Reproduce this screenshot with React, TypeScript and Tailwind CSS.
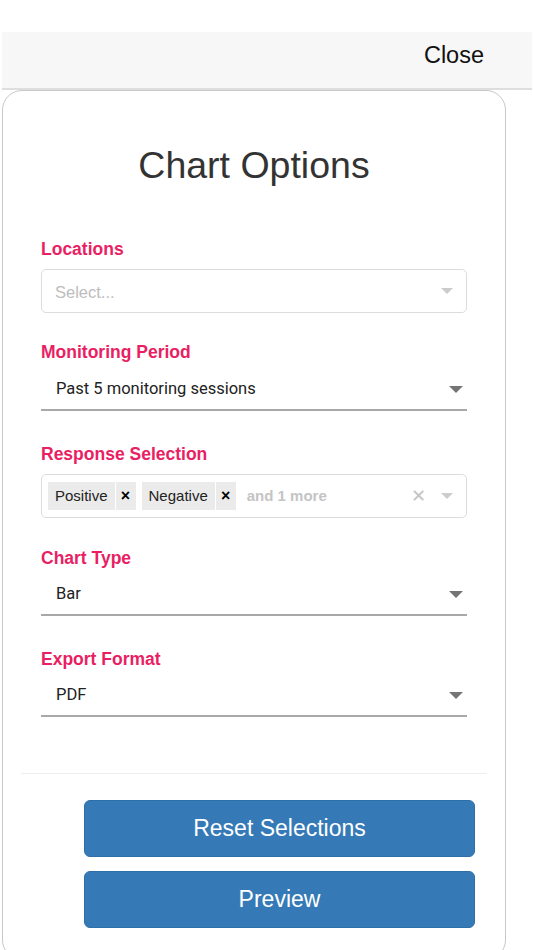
import React from "react";

const sans = "font-['Liberation_Sans',Arial,sans-serif]";
const roboto = "font-['Roboto',Arial,sans-serif]";

function Caret({ color = "#757575", w = 14 }: { color?: string; w?: number }) {
  return (
    <svg width={w} height={w / 2} viewBox="0 0 14 7">
      <path d="M0 0h14L7 7z" fill={color} />
    </svg>
  );
}

function FieldLabel({ children, top }: { children: React.ReactNode; top: string }) {
  return (
    <div className={`${sans} ${top} text-[17.5px] leading-[20px] font-bold text-[#e91e63]`}>
      {children}
    </div>
  );
}

function UnderlineSelect({ value, pt }: { value: string; pt: string }) {
  return (
    <div
      className={`flex items-center justify-between border-b-2 border-[#a8a8a8] ${pt} pb-[10px] pl-[15px] pr-[4px]`}
    >
      <span className={`${roboto} text-[16.5px] leading-[20px] text-[#222]`}>{value}</span>
      <Caret />
    </div>
  );
}

function Chip({ label }: { label: string }) {
  return (
    <div className="flex h-[28px] items-center bg-[#ebebeb]">
      <span className={`${sans} px-[7px] text-[15px] text-[#222]`}>{label}</span>
      <span className={`${sans} flex h-full w-[21px] items-center justify-center border-l border-white text-[16px] font-bold text-black`}>
        ×
      </span>
    </div>
  );
}

export default function App() {
  return (
    <div className="h-[950px] w-[534px] overflow-hidden bg-white pt-[32px]">
      <div className="ml-[2px] flex h-[58px] w-[530px] items-center justify-end border-b-2 border-[#dedede] bg-[#f7f7f7] pb-[8px] pr-[48px]">
        <span className={`${sans} text-[23.5px] text-[#111]`}>Close</span>
      </div>

      <div className="ml-[2px] h-[870px] w-[504px] rounded-[20px] border border-[#c8c8c8] px-[38px] pt-[53px]">
        <h1 className={`${sans} text-center text-[37.5px] leading-[42px] text-[#333]`}>Chart Options</h1>

        <FieldLabel top="mt-[53px]">Locations</FieldLabel>
        <div className="mt-[10px] flex h-[44px] items-center justify-between rounded-[5px] border border-[#dcdcdc] pl-[13px] pr-[13px]">
          <span className={`${sans} pt-[2px] text-[16.5px] text-[#bdbdbd]`}>Select...</span>
          <Caret color="#cccccc" w={12} />
        </div>

        <FieldLabel top="mt-[29px]">Monitoring Period</FieldLabel>
        <UnderlineSelect value="Past 5 monitoring sessions" pt="pt-[17px]" />

        <FieldLabel top="mt-[33px]">Response Selection</FieldLabel>
        <div className="mt-[10px] flex h-[44px] items-center rounded-[5px] border border-[#dcdcdc] pl-[6px] pr-[13px]">
          <div className="flex items-center gap-[6px]">
            <Chip label="Positive" />
            <Chip label="Negative" />
          </div>
          <span className={`${sans} ml-[11px] flex-1 text-[15px] font-bold text-[#c4c4c4]`}>and 1 more</span>
          <span className={`${sans} mr-[15px] text-[18px] text-[#c4c4c4]`}>✕</span>
          <Caret color="#cccccc" w={12} />
        </div>

        <FieldLabel top="mt-[30px]">Chart Type</FieldLabel>
        <UnderlineSelect value="Bar" pt="pt-[16px]" />

        <FieldLabel top="mt-[33px]">Export Format</FieldLabel>
        <UnderlineSelect value="PDF" pt="pt-[16px]" />

        <div className="-mx-[20px] mt-[56px] border-t border-[#eeeeee] pl-[63px] pr-[12px] pt-[26px]">
          <button className={`${sans} flex h-[57px] w-full items-center justify-center rounded-[6px] border border-[#2f6fa8] bg-[#357ab7] text-[23px] text-white`}>
            Reset Selections
          </button>
          <button className={`${sans} mt-[14px] flex h-[57px] w-full items-center justify-center rounded-[6px] border border-[#2f6fa8] bg-[#357ab7] text-[23px] text-white`}>
            Preview
          </button>
        </div>
      </div>
    </div>
  );
}
